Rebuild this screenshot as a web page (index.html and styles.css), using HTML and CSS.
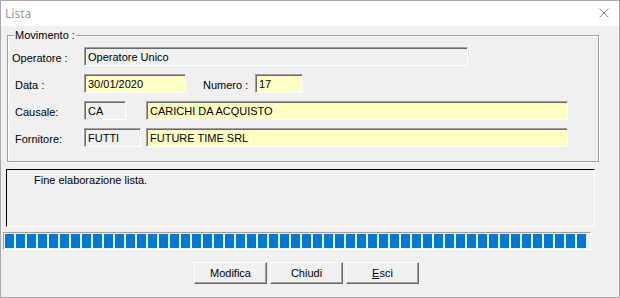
FILE: index.html
```html
<html lang="it">
<head>
    <meta charset="UTF-8">
    <title>Lista</title>
    <link rel="stylesheet" href="styles.css">
</head>
<body>
    <div class="window">
        <!-- Title bar -->
        <div class="titlebar">
            <span class="title">Lista</span>
            <svg class="close" width="10" height="10" viewBox="0 0 10 10">
                <path d="M0.5 0.5 L9.5 9.5 M9.5 0.5 L0.5 9.5" stroke="#8c8c8c" stroke-width="1" fill="none"/>
            </svg>
        </div>

        <div class="content">
            <!-- Movimento group -->
            <div class="groupbox">
                <span class="caption">Movimento :</span>
                <div class="row">
                    <label class="lbl first">Operatore :</label>
                    <div class="field ro w-operatore">Operatore Unico</div>
                </div>
                <div class="row">
                    <label class="lbl">Data :</label>
                    <div class="field edit w-data">30/01/2020</div>
                    <label class="lbl-numero">Numero :</label>
                    <div class="field edit w-numero">17</div>
                </div>
                <div class="row">
                    <label class="lbl">Causale:</label>
                    <div class="field ro w-causale">CA</div>
                    <div class="field edit w-desc gap-causale">CARICHI DA ACQUISTO</div>
                </div>
                <div class="row">
                    <label class="lbl">Fornitore:</label>
                    <div class="field ro w-fornitore">FUTTI</div>
                    <div class="field edit w-desc gap-fornitore">FUTURE TIME SRL</div>
                </div>
            </div>

            <!-- Message panel -->
            <div class="messages">Fine elaborazione lista.</div>

            <!-- Progress -->
            <div class="progress">
                <div class="progress-fill"></div>
            </div>

            <!-- Buttons -->
            <div class="buttons">
                <button class="btn">Modifica</button>
                <button class="btn">Chiudi</button>
                <button class="btn"><u>E</u>sci</button>
            </div>
        </div>
    </div>
</body>
</html>
```

FILE: styles.css
```css
body {
    margin: 0;
    font-family: "Liberation Sans", Arial, sans-serif;
    font-size: 11px;
    color: #000;
    background: #f0f0f0;
}
.window {
    width: 620px;
    height: 298px;
    box-sizing: border-box;
    border: 1px solid #a8a8a8;
    background: #f0f0f0;
    overflow: hidden;
}
.titlebar {
    height: 25px;
    background: #fff;
    display: flex;
    align-items: center;
    justify-content: space-between;
    padding: 0 10px 0 4px;
}
.title {
    font-family: "Noto Sans", "Liberation Sans", sans-serif;
    font-size: 12px;
    color: #9a9a9a;
    margin-top: -1px;
}
.close {
    margin-top: -2px;
}
.content {
    display: flex;
    flex-direction: column;
    align-items: flex-start;
}
.groupbox {
    position: relative;
    margin: 9px 0 0 6px;
    width: 592px;
    height: 127px;
    box-sizing: border-box;
    border: 1px solid #a0a0a0;
    box-shadow: 1px 1px 0 #fff, inset 1px 1px 0 #fff;
    padding: 11px 0 0 4px;
    display: flex;
    flex-direction: column;
    gap: 8px;
}
.caption {
    position: absolute;
    top: -8px;
    left: 6px;
    padding: 0 1px;
    background: #f0f0f0;
    line-height: 14px;
}
.row {
    display: flex;
    align-items: flex-start;
    height: 19px;
}
.lbl {
    width: 69px;
    margin-left: 3px;
    padding-top: 5px;
}
.lbl.first {
    width: 72px;
    margin-left: 0;
}
.lbl-numero {
    margin-left: 17px;
    width: 52px;
    padding-top: 5px;
}
.field {
    height: 19px;
    box-sizing: border-box;
    border: 1px solid;
    border-color: #a0a0a0 #fff #fff #a0a0a0;
    box-shadow: inset 1px 1px 0 #696969;
    padding: 2px 0 0 3px;
    line-height: 14px;
    white-space: nowrap;
}
.ro {
    background: #f0f0f0;
}
.edit {
    background: #ffffc4;
}
.w-operatore { width: 384px; }
.w-data { width: 102px; }
.w-numero { width: 48px; }
.w-causale { width: 42px; }
.w-fornitore { width: 57px; }
.w-desc { width: 422px; }
.gap-causale { margin-left: 20px; }
.gap-fornitore { margin-left: 5px; }
.messages {
    margin: 7px 0 0 5px;
    width: 589px;
    height: 58px;
    box-sizing: border-box;
    border: 1px solid;
    border-color: #000 #fff #fff #000;
    padding: 3px 0 0 27px;
    line-height: 14px;
}
.progress {
    margin: 5px 0 0 2px;
    width: 588px;
    height: 18px;
    box-sizing: border-box;
    border: 1px solid;
    border-color: #a0a0a0 #fff #fff #a0a0a0;
    padding: 1px;
}
.progress-fill {
    width: 581px;
    height: 14px;
    background: repeating-linear-gradient(to right, #0078d7 0 9px, transparent 9px 11px);
}
.buttons {
    margin: 12px 0 0 193px;
    display: flex;
    gap: 3px;
}
.btn {
    width: 73px;
    height: 22px;
    box-sizing: border-box;
    background: #f0f0f0;
    font-family: "Liberation Sans", Arial, sans-serif;
    font-size: 11px;
    color: #000;
    border: 1px solid;
    border-color: #fff #696969 #696969 #fff;
    box-shadow: inset -1px -1px 0 #a0a0a0;
    padding: 0;
}
.btn u {
    text-decoration: underline;
}
```
